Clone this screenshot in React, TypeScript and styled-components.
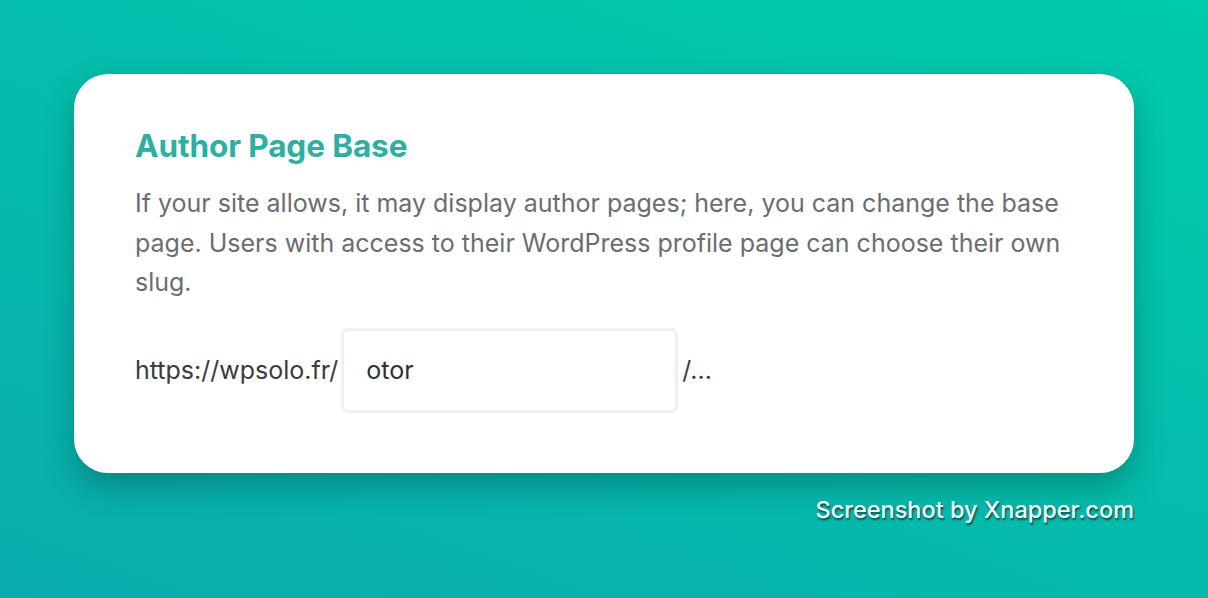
import styled, { createGlobalStyle } from "styled-components";

const GlobalStyle = createGlobalStyle`
    html, body {
        margin: 0;
        padding: 0;
    }
    body {
        font-family: Inter, "Noto Sans", sans-serif;
    }
`

const App = () => {
    return (
        <Page>
            <GlobalStyle />
            <Card>
                <Title>Author Page Base</Title>
                <Description>
                    If your site allows, it may display author pages; here, you can change the base
                    page. Users with access to their WordPress profile page can choose their own
                    slug.
                </Description>
                <UrlRow>
                    <UrlPart>https://wpsolo.fr/</UrlPart>
                    <SlugInput type="text" defaultValue="otor" />
                    <UrlPart>/...</UrlPart>
                </UrlRow>
            </Card>
            <Watermark>Screenshot by Xnapper.com</Watermark>
        </Page>
    )
}

export default App;

const Page = styled.div`
    width: 1208px;
    height: 598px;
    box-sizing: border-box;
    padding: 74px 74px 0;
    background: linear-gradient(20deg, #0aabad 0%, #05bbab 45%, #00cbac 100%);
    display: flex;
    flex-direction: column;
    overflow: hidden;
`

const Card = styled.div`
    height: 399px;
    box-sizing: border-box;
    background: #ffffff;
    border-radius: 34px;
    padding: 52px 50px 0 61px;
    box-shadow: 0 14px 30px rgba(0, 60, 60, 0.35);
    display: flex;
    flex-direction: column;
`

const Title = styled.h2`
    margin: 0;
    font-size: 31.5px;
    line-height: 40px;
    font-weight: 700;
    color: #2bb0a3;
    letter-spacing: -0.1px;
`

const Description = styled.p`
    margin: 18px 0 0;
    font-size: 25px;
    line-height: 39.5px;
    color: #6a6d72;
`

const UrlRow = styled.div`
    margin-top: 25px;
    display: flex;
    align-items: center;
`

const UrlPart = styled.span`
    font-size: 25px;
    color: #3a3c40;
`

const SlugInput = styled.input`
    width: 337px;
    height: 85px;
    box-sizing: border-box;
    margin: 0 4px 0 3px;
    padding: 0 22px;
    border: 3px solid #eef0f1;
    border-radius: 7px;
    font-family: Inter, "Noto Sans", sans-serif;
    font-size: 25px;
    color: #2e3034;
    outline: 0;
`

const Watermark = styled.div`
    margin-top: 22px;
    align-self: flex-end;
    font-size: 23.5px;
    font-weight: 500;
    color: #f4fffd;
    text-shadow: 1px 2px 2px rgba(0, 40, 40, 0.75);
`
